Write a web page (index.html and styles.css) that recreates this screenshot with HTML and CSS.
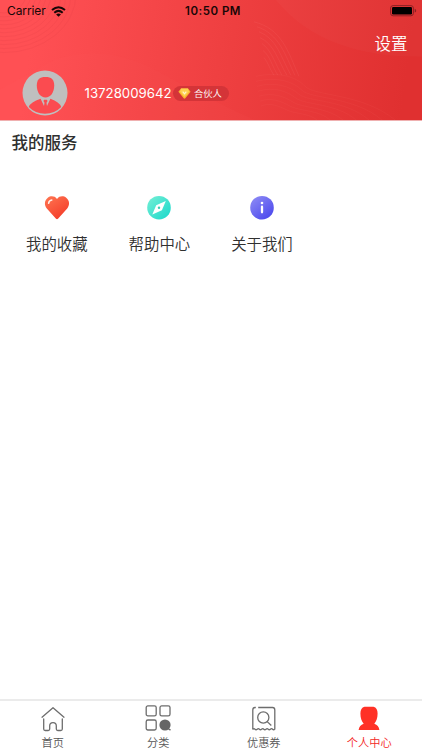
FILE: index.html
```html
<!DOCTYPE html>
<html lang="zh-CN">
<head>
<meta charset="utf-8">
<title>个人中心</title>
<link rel="stylesheet" href="styles.css">
</head>
<body>
<div class="app">
  <header class="header">
    <svg class="header-art" viewBox="0 0 422 121" preserveAspectRatio="none">
      <defs>
        <linearGradient id="hg" gradientUnits="userSpaceOnUse" x1="30" y1="40" x2="405" y2="90"><stop offset="0" stop-color="#ff5054"/><stop offset=".5" stop-color="#ef4041"/><stop offset="1" stop-color="#e03030"/></linearGradient>
      </defs>
      <rect width="422" height="121" fill="url(#hg)"/>
      <path d="M276 0C302 32 345 58 422 57V0Z" fill="#fff" opacity=".022"/>
      <path d="M55 60Q105 43 158 72T255 121H0V90Z" fill="#ff6060" opacity=".06"/>
      <g fill="none" stroke="#d93942" stroke-width=".8" opacity=".18">
        <ellipse cx="4" cy="-6" rx="22" ry="19"/><ellipse cx="4" cy="-6" rx="27" ry="23"/><ellipse cx="4" cy="-6" rx="32" ry="27"/><ellipse cx="4" cy="-6" rx="37" ry="31"/><ellipse cx="4" cy="-6" rx="42" ry="35"/><ellipse cx="4" cy="-6" rx="47" ry="39"/><ellipse cx="4" cy="-6" rx="52" ry="43"/><ellipse cx="4" cy="-6" rx="57" ry="47"/><ellipse cx="4" cy="-6" rx="62" ry="51"/><ellipse cx="4" cy="-6" rx="67" ry="55"/><ellipse cx="4" cy="-6" rx="72" ry="59"/>
      </g>
      <g fill="none" stroke="#ff8080" stroke-width=".6" opacity=".22">
        <path d="M254 22C282 29 288 52 299 77"/><path d="M257 27C279 34 285 55 295 76"/><path d="M259 32C277 39 281 58 291 76"/><path d="M260 38C274 44 278 61 287 76"/><path d="M262 44C271 50 275 64 282 76"/><path d="M263 51C270 56 272 67 278 76"/><path d="M264 58C268 63 270 70 274 76"/>
      </g>
      <g fill="none" stroke="#ff7770" stroke-width=".6" opacity=".14">
        <path d="M256 77C278 72 296 77 305 87S363 94 395 121"/><path d="M256 82C277 77 293 82 302 91S354 97 382 121"/><path d="M257 87C275 82 290 87 299 95S345 100 369 121"/><path d="M258 92C274 87 287 92 296 99S337 104 356 121"/><path d="M259 97C272 93 284 97 293 103S328 108 343 121"/><path d="M260 102C271 98 281 102 290 107S320 111 330 121"/><path d="M261 107C270 103 279 107 287 111S309 114 317 121"/>
      </g>
    </svg>
    <div class="status">
      <div class="carrier"><span>Carrier</span>
        <svg width="15" height="11" viewBox="0 0 15 11"><g fill="none" stroke="#180707" stroke-width="2"><path d="M1 4Q7.5-1.6 14 4"/><path d="M3.3 6.7Q7.5 3.1 11.7 6.7"/></g><path d="M5.1 8.4Q7.5 6.5 9.9 8.4L7.5 10.8Z" fill="#180707"/></svg>
      </div>
      <div class="time">10:50 PM</div>
      <svg class="battery" width="27" height="12" viewBox="0 0 27 12"><rect x=".6" y=".6" width="22.8" height="10.2" rx="2.5" fill="none" stroke="#8d2024"/><rect x="2" y="2" width="20" height="7.4" rx="1.2" fill="#000"/><path d="M24.7 3.8Q26.2 4.3 26.2 5.7T24.7 7.6Z" fill="#8d2024"/></svg>
    </div>
    <div class="nav"><span>设置</span></div>
    <div class="profile">
      <svg class="avatar" width="46" height="46" viewBox="0 0 46 46"><circle cx="23" cy="23" r="22.5" fill="#bfbfbf"/><path d="M23.5 7C29.5 7 32.2 9.5 32.2 15.5C32.2 22.5 28.6 27.5 23.5 27.5S14.8 22.5 14.8 15.5C14.8 9.5 17.5 7 23.5 7Z" fill="#fb4b50"/><path d="M6.8 37Q8.5 32 18.6 28.8L22 36L22.5 32.7L21.4 31L22.2 29.8H24.8L25.6 31L24.5 32.7L25 36L28.4 28.8Q37.5 32 39.2 37Q32.5 43.8 23 43.8T6.8 37Z" fill="#fb4b50"/></svg>
      <span class="phone">13728009642</span>
      <span class="badge"><svg width="13" height="11" viewBox="0 0 13 11"><path d="M3 .4H10L12.6 3.8L7.3 10.3Q6.5 11 5.7 10.3L.4 3.8Z" fill="#f9b52f"/><path d="M3 .4H10L11 3.8L6.5 9L2 3.8Z" fill="#ffd050"/><path d="M4.7 3.7L6.5 5.9L8.3 3.7" fill="none" stroke="#fff6ce" stroke-width="1.2"/></svg><span>合伙人</span></span>
    </div>
  </header>
  <main class="main">
    <h1 class="title">我的服务</h1>
    <div class="services">
      <div class="service">
        <svg width="26" height="26" viewBox="0 0 26 26"><defs><linearGradient id="heart" x1="0" y1="0" x2=".7" y2="1"><stop stop-color="#ff7652"/><stop offset="1" stop-color="#f43c29"/></linearGradient></defs><path d="M13 3.9C15.3.8 19.5.7 22.2 2.7C25.9 5.5 25.8 10.2 23.2 13.4L14 23.8Q13 24.7 12 23.8L2.8 13.4C.2 10.2.1 5.5 3.8 2.7C6.5.7 10.7.8 13 3.9Z" fill="url(#heart)"/><path d="M4.6 8.3Q5 5.4 7.8 5.1" fill="none" stroke="#fff0e8" stroke-width="1.5" stroke-linecap="round"/></svg>
        <span>我的收藏</span>
      </div>
      <div class="service">
        <svg width="26" height="26" viewBox="0 0 26 26"><defs><linearGradient id="compass" x1="0" y1="0" x2="1" y2="1"><stop stop-color="#77efd5"/><stop offset="1" stop-color="#18d8cb"/></linearGradient></defs><circle cx="13" cy="12.7" r="11.8" fill="url(#compass)"/><path d="M19.8 6L15.9 15.2L6.3 19.5L10.2 10.3Z" fill="#fff"/><circle cx="13" cy="12.7" r="1.2" fill="#35ceb5"/></svg>
        <span>帮助中心</span>
      </div>
      <div class="service">
        <svg width="26" height="26" viewBox="0 0 26 26"><defs><linearGradient id="info" x1="0" y1="0" x2=".8" y2="1"><stop stop-color="#928ff5"/><stop offset="1" stop-color="#4b48ed"/></linearGradient></defs><circle cx="13" cy="12.7" r="11.8" fill="url(#info)"/><circle cx="13" cy="8" r="1.3" fill="#fff"/><path d="M13 11.7V17.3" stroke="#fff" stroke-width="2.3" stroke-linecap="round"/></svg>
        <span>关于我们</span>
      </div>
    </div>
  </main>
  <nav class="tabs">
    <div class="tab">
      <svg width="28" height="28" viewBox="0 0 28 28"><g fill="none" stroke="#6d6d6d" stroke-width="1.3" stroke-linecap="round" stroke-linejoin="round"><path d="M3 13.2L14 3.7L25 13.2"/><path d="M4.7 15V25Q4.7 26.5 6.2 26.5H9.2Q10.7 26.5 10.7 25V21.8Q10.7 18.6 14 18.6T17.3 21.8V25Q17.3 26.5 18.8 26.5H21.8Q23.3 26.5 23.3 25V15"/></g></svg>
      <span>首页</span>
    </div>
    <div class="tab">
      <svg width="28" height="28" viewBox="0 0 28 28"><g fill="none" stroke="#6d6d6d" stroke-width="1.3"><rect x="2.2" y="1.9" width="10" height="10" rx="1.7"/><rect x="16" y="1.9" width="10" height="10" rx="1.7"/><rect x="2.2" y="16" width="10" height="10" rx="1.7"/></g><circle cx="21" cy="21" r="5.6" fill="#666"/><path d="M24 24.5L26.5 26.2" stroke="#666" stroke-width="1.4"/></svg>
      <span>分类</span>
    </div>
    <div class="tab">
      <svg width="28" height="28" viewBox="0 0 28 28"><g fill="none" stroke="#6d6d6d" stroke-width="1.3"><path d="M5.8 3.5H5Q2.8 3.5 2.8 6V25.5M8.2 3.5H22.6Q24.8 3.5 24.8 6V25.5"/><path d="M2.8 25.2Q4 24.1 5 25.2T7.2 25.2T9.4 25.2T11.6 25.2T13.8 25.2T16 25.2T18.2 25.2T20.4 25.2T22.6 25.2T24.8 25.2"/><circle cx="13.3" cy="13.5" r="5.6"/><path d="M17.2 17.6L21.3 21.5"/></g></svg>
      <span>优惠券</span>
    </div>
    <div class="tab active">
      <svg width="28" height="28" viewBox="0 0 28 28"><path d="M9.5 2.8H18.5Q22.6 4 22.6 9.5C22.6 14.5 21.3 17.2 19.3 19.7Q23.7 21 24.4 26H3.6Q4.3 21 8.7 19.7C6.7 17.2 5.4 14.5 5.4 9.5Q5.4 4 9.5 2.8Z" fill="#ff3126"/></svg>
      <span>个人中心</span>
    </div>
  </nav>
</div>
</body>
</html>
```
FILE: styles.css
```css
* { box-sizing: border-box; }
body { margin: 0; background: #fff; color: #303030; font-family: "Noto Sans CJK SC", sans-serif; font-weight: 350; }
svg { display: block; flex-shrink: 0; }
.app { height: 750px; display: flex; flex-direction: column; overflow: hidden; }
.header { position: relative; height: 121px; flex-shrink: 0; border-bottom: 1px solid #efb0b0; }
.header-art { position: absolute; inset: 0; width: 100%; height: 100%; z-index: -1; }
.status { height: 22px; display: grid; grid-template-columns: 1fr auto 1fr; align-items: center; padding: 0 5px 0 7px; font: 12px/22px Inter, sans-serif; color: #180707; }
.carrier { display: flex; align-items: center; gap: 5px; letter-spacing: -.1px; }
.time { font-size: 11.5px; font-weight: 600; letter-spacing: .5px; position: relative; left: 1px; }
.battery { justify-self: end; }
.nav { height: 42px; display: flex; justify-content: flex-end; align-items: center; padding-right: 14.5px; color: #fff; font-size: 16.5px; line-height: 24px; }
.profile { height: 58px; display: flex; align-items: center; padding-left: 22px; color: #fff; }
.phone { margin-left: 16.5px; width: 88.5px; font: 13.25px/20px Inter, sans-serif; white-space: nowrap; }
.badge { display: flex; align-items: center; gap: 3px; width: 56px; height: 15px; padding-left: 5px; border-radius: 8px; background: #d43438; font-size: 9.3px; line-height: 15px; white-space: nowrap; }
.main { flex: 1; }
.title { margin: 8px 0 0 11.5px; font-size: 16.5px; line-height: 26px; font-weight: 500; color: #303030; }
.services { display: grid; grid-template-columns: repeat(4, 102.6px); padding: 40px 0 0 5.5px; }
.service { display: flex; flex-direction: column; align-items: center; gap: 11px; font-size: 15.4px; line-height: 22px; }
.tabs { height: 51px; display: grid; grid-template-columns: repeat(4, 1fr); border-top: 2px solid #ebebeb; }
.tab { display: flex; flex-direction: column; align-items: center; padding-top: 3px; font-size: 11.2px; line-height: 20px; color: #555; }
.active { color: #f3261e; }
```
